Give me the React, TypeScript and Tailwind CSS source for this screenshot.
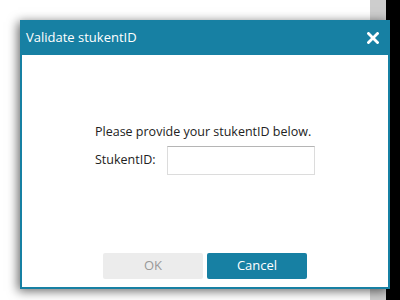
import React from "react";

export default function App() {
  const font = { fontFamily: '"Open Sans", "Noto Sans", sans-serif' };
  return (
    <div className="relative flex h-[300px] w-[400px] overflow-hidden bg-white" style={font}>
      <div className="flex-1 bg-white" />
      <div className="w-[16px] bg-[#cdcdcd]" />
      <div className="w-[14px] bg-black" />

      <div className="absolute left-[20px] top-[20px] flex h-[269px] w-[370px] flex-col bg-[#1780a3] px-[2px] pb-[2px] shadow-[-2px_2px_10px_rgba(0,0,0,0.6)]">
        <div className="flex h-[35px] items-center justify-between pl-[4px] pr-[9px]">
          <span className="mt-[1px] text-[13px] text-white">Validate stukentID</span>
          <svg width="12" height="12" viewBox="0 0 12 12" className="mt-[1px]">
            <path d="M1.5 1.5 L10.5 10.5 M10.5 1.5 L1.5 10.5" stroke="white" strokeWidth="2.8" strokeLinecap="square" />
          </svg>
        </div>
        <div className="flex flex-1 flex-col items-center bg-white">
          <div className="mt-[68px] flex flex-col">
            <div className="text-[12.5px] leading-[18px] text-[#222]">Please provide your stukentID below.</div>
            <div className="mt-[5px] flex items-center">
              <span className="w-[72px] text-[12.5px] text-[#222]">StukentID:</span>
              <input className="h-[29px] w-[148px] border border-[#dcdcdc] border-t-[#b5b5b5] bg-white outline-none" />
            </div>
          </div>
          <div className="mt-auto mb-[8px] flex gap-[4px]">
            <button className="h-[26px] w-[100px] rounded-[2px] bg-[#ececec] text-[13px] text-[#999]">OK</button>
            <button className="h-[26px] w-[100px] rounded-[2px] bg-[#1780a3] text-[13px] text-white">Cancel</button>
          </div>
        </div>
      </div>
    </div>
  );
}
